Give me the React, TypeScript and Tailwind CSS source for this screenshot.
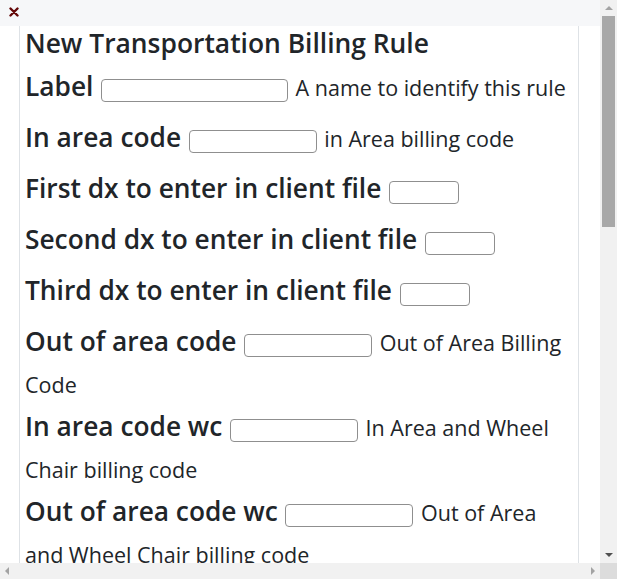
import { useState } from 'react';

type Rule = {
  key: string;
  label: string;
  width: string;
  hint?: string;
};

const rules: Rule[] = [
  { key: 'label', label: 'Label', width: 'w-[187px]', hint: 'A name to identify this rule' },
  { key: 'inArea', label: 'In area code', width: 'w-[128px]', hint: 'in Area billing code' },
  { key: 'dx1', label: 'First dx to enter in client file', width: 'w-[70px]' },
  { key: 'dx2', label: 'Second dx to enter in client file', width: 'w-[70px]' },
  { key: 'dx3', label: 'Third dx to enter in client file', width: 'w-[70px]' },
  { key: 'outArea', label: 'Out of area code', width: 'w-[128px]', hint: 'Out of Area Billing Code' },
  { key: 'inAreaWc', label: 'In area code wc', width: 'w-[128px]', hint: 'In Area and Wheel Chair billing code' },
  { key: 'outAreaWc', label: 'Out of area code wc', width: 'w-[128px]', hint: 'Out of Area and Wheel Chair billing code' },
];

const RuleRow = ({ rule, value, onChange }: { rule: Rule; value: string; onChange: (v: string) => void }) => (
  <div className="text-[21.5px] leading-[34px]">
    <span className="inline-block mt-[6px] mb-[8px] text-[26.3px] font-semibold leading-[37px] text-[#212529]">
      {rule.label}
    </span>{' '}
    <input
      value={value}
      onChange={(e) => onChange(e.target.value)}
      className={`${rule.width} h-[23px] mx-[2px] rounded-[4px] border border-[#8f8f8f] bg-white px-1 text-[16px] outline-none`}
    />{' '}
    {rule.hint && <span className="text-[#212529]">{rule.hint}</span>}
  </div>
);

export default function App() {
  const [values, setValues] = useState<Record<string, string>>({});

  return (
    <div className="w-[617px] h-[579px] flex flex-col overflow-hidden bg-white font-['Open_Sans',sans-serif] text-[#212529]">
      <div className="flex flex-1 min-h-0">
        <div className="flex-1 min-w-0 flex flex-col">
          <div className="h-[26px] shrink-0 bg-[#f6f7f9] flex items-start pt-[6px] pl-[8px]">
            <button className="w-[11px] h-[11px] flex items-center justify-center">
              <svg width="10" height="10" viewBox="0 0 10 10">
                <path d="M1.5 1.5 L8.5 8.5 M8.5 1.5 L1.5 8.5" stroke="#640808" strokeWidth="2.4" strokeLinecap="round" />
              </svg>
            </button>
          </div>
          <div className="ml-[19px] w-[560px] flex-1 min-h-0 overflow-hidden border-x border-[#dee2e6] pl-[5px] pr-[8px]">
            <h3 className="mt-[2px] mb-[3px] text-[26.4px] font-semibold leading-[31px]">New Transportation Billing Rule</h3>
            {rules.map((r) => (
              <RuleRow
                key={r.key}
                rule={r}
                value={values[r.key] ?? ''}
                onChange={(v) => setValues((prev) => ({ ...prev, [r.key]: v }))}
              />
            ))}
          </div>
        </div>
        <div className="w-[17px] shrink-0 bg-[#f1f1f1] flex flex-col items-center">
          <div className="h-[16px] flex items-center justify-center">
            <div className="w-0 h-0 border-x-[4px] border-x-transparent border-b-[4px] border-b-[#a3a3a3]" />
          </div>
          <div className="w-[13px] h-[211px] bg-[#a8a8a8]" />
          <div className="flex-1" />
          <div className="h-[16px] flex items-center justify-center">
            <div className="w-0 h-0 border-x-[4px] border-x-transparent border-t-[4px] border-t-[#505050]" />
          </div>
        </div>
      </div>
      <div className="h-[16px] shrink-0 flex">
        <div className="flex-1 bg-[#f1f1f1] flex items-center justify-between px-[5px]">
          <div className="w-0 h-0 border-y-[4px] border-y-transparent border-r-[4px] border-r-[#a3a3a3]" />
          <div className="w-0 h-0 border-y-[4px] border-y-transparent border-l-[4px] border-l-[#a3a3a3]" />
        </div>
        <div className="w-[17px] bg-[#dcdcdc]" />
      </div>
    </div>
  );
}
